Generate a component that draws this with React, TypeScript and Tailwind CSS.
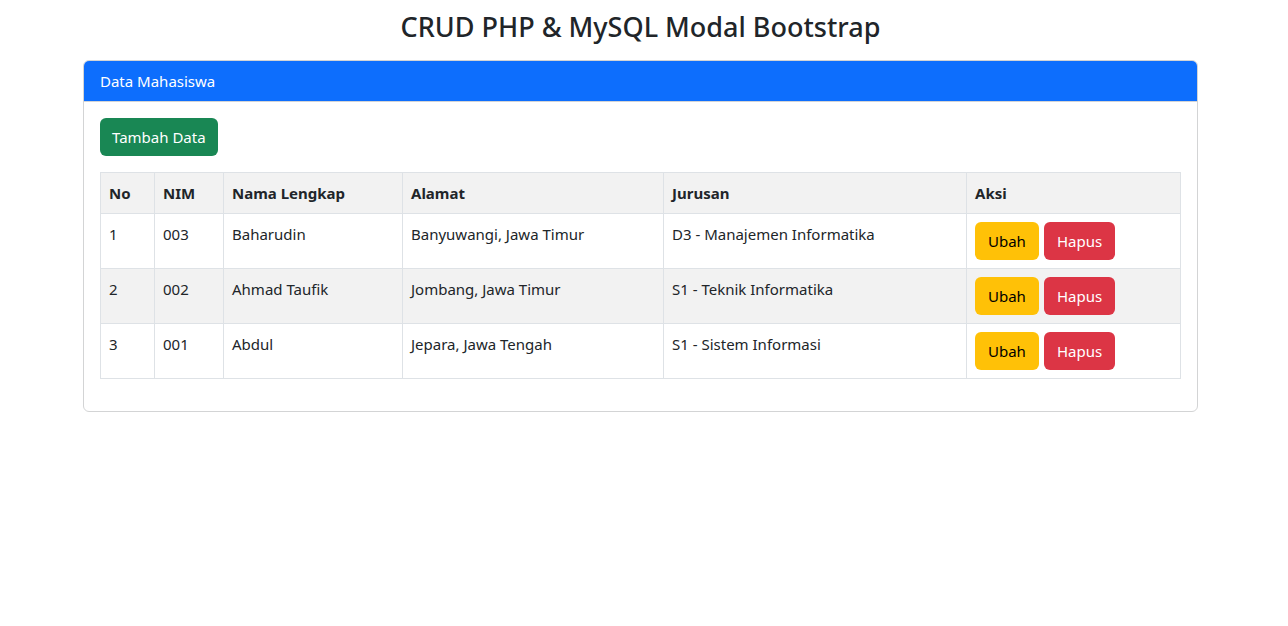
import React from "react";

const rows = [
  { no: "1", nim: "003", nama: "Baharudin", alamat: "Banyuwangi, Jawa Timur", jurusan: "D3 - Manajemen Informatika", striped: false },
  { no: "2", nim: "002", nama: "Ahmad Taufik", alamat: "Jombang, Jawa Timur", jurusan: "S1 - Teknik Informatika", striped: true },
  { no: "3", nim: "001", nama: "Abdul", alamat: "Jepara, Jawa Tengah", jurusan: "S1 - Sistem Informasi", striped: false },
];

export default function App() {
  return (
    <div className="min-h-screen bg-white text-[#212529] text-[15px] leading-[24px]" style={{ fontFamily: '"Noto Sans", "Open Sans", sans-serif' }}>
      <div className="w-[1115px] ml-[83px]">
        <h2 className="text-[27px] font-medium leading-[38px] text-center pt-[8px] mb-[14px]">CRUD PHP &amp; MySQL Modal Bootstrap</h2>
        <div className="border border-[#d3d4d5] rounded-[6px] overflow-hidden">
          <div className="bg-[#0d6efd] text-white h-[41px] px-[16px] flex items-center border-b border-[#d3d4d5]">Data Mahasiswa</div>
          <div className="p-[16px]">
            <button className="bg-[#198754] text-white rounded-[6px] h-[38px] px-[12px] mb-[16px]">Tambah Data</button>
            <table className="w-full border-collapse mb-[16px]">
              <thead>
                <tr className="bg-[#f2f2f2] h-[41px]">
                  <th className="w-[54px] border border-[#dee2e6] px-[8px] text-left font-bold">No</th>
                  <th className="w-[69px] border border-[#dee2e6] px-[8px] text-left font-bold">NIM</th>
                  <th className="w-[179px] border border-[#dee2e6] px-[8px] text-left font-bold">Nama Lengkap</th>
                  <th className="w-[261px] border border-[#dee2e6] px-[8px] text-left font-bold">Alamat</th>
                  <th className="w-[303px] border border-[#dee2e6] px-[8px] text-left font-bold">Jurusan</th>
                  <th className="border border-[#dee2e6] px-[8px] text-left font-bold">Aksi</th>
                </tr>
              </thead>
              <tbody>
                {rows.map((r) => (
                  <tr key={r.no} className={r.striped ? "bg-[#f2f2f2] h-[55px]" : "bg-white h-[55px]"}>
                    <td className="border border-[#dee2e6] px-[8px] pt-[8px] pb-[8px] align-top">{r.no}</td>
                    <td className="border border-[#dee2e6] px-[8px] pt-[8px] pb-[8px] align-top">{r.nim}</td>
                    <td className="border border-[#dee2e6] px-[8px] pt-[8px] pb-[8px] align-top">{r.nama}</td>
                    <td className="border border-[#dee2e6] px-[8px] pt-[8px] pb-[8px] align-top">{r.alamat}</td>
                    <td className="border border-[#dee2e6] px-[8px] pt-[8px] pb-[8px] align-top">{r.jurusan}</td>
                    <td className="border border-[#dee2e6] p-[8px] align-top">
                      <div className="flex gap-[5px]">
                        <button className="bg-[#ffc107] text-black rounded-[6px] h-[38px] px-[13px]">Ubah</button>
                        <button className="bg-[#dc3545] text-white rounded-[6px] h-[38px] px-[13px]">Hapus</button>
                      </div>
                    </td>
                  </tr>
                ))}
              </tbody>
            </table>
          </div>
        </div>
      </div>
    </div>
  );
}
